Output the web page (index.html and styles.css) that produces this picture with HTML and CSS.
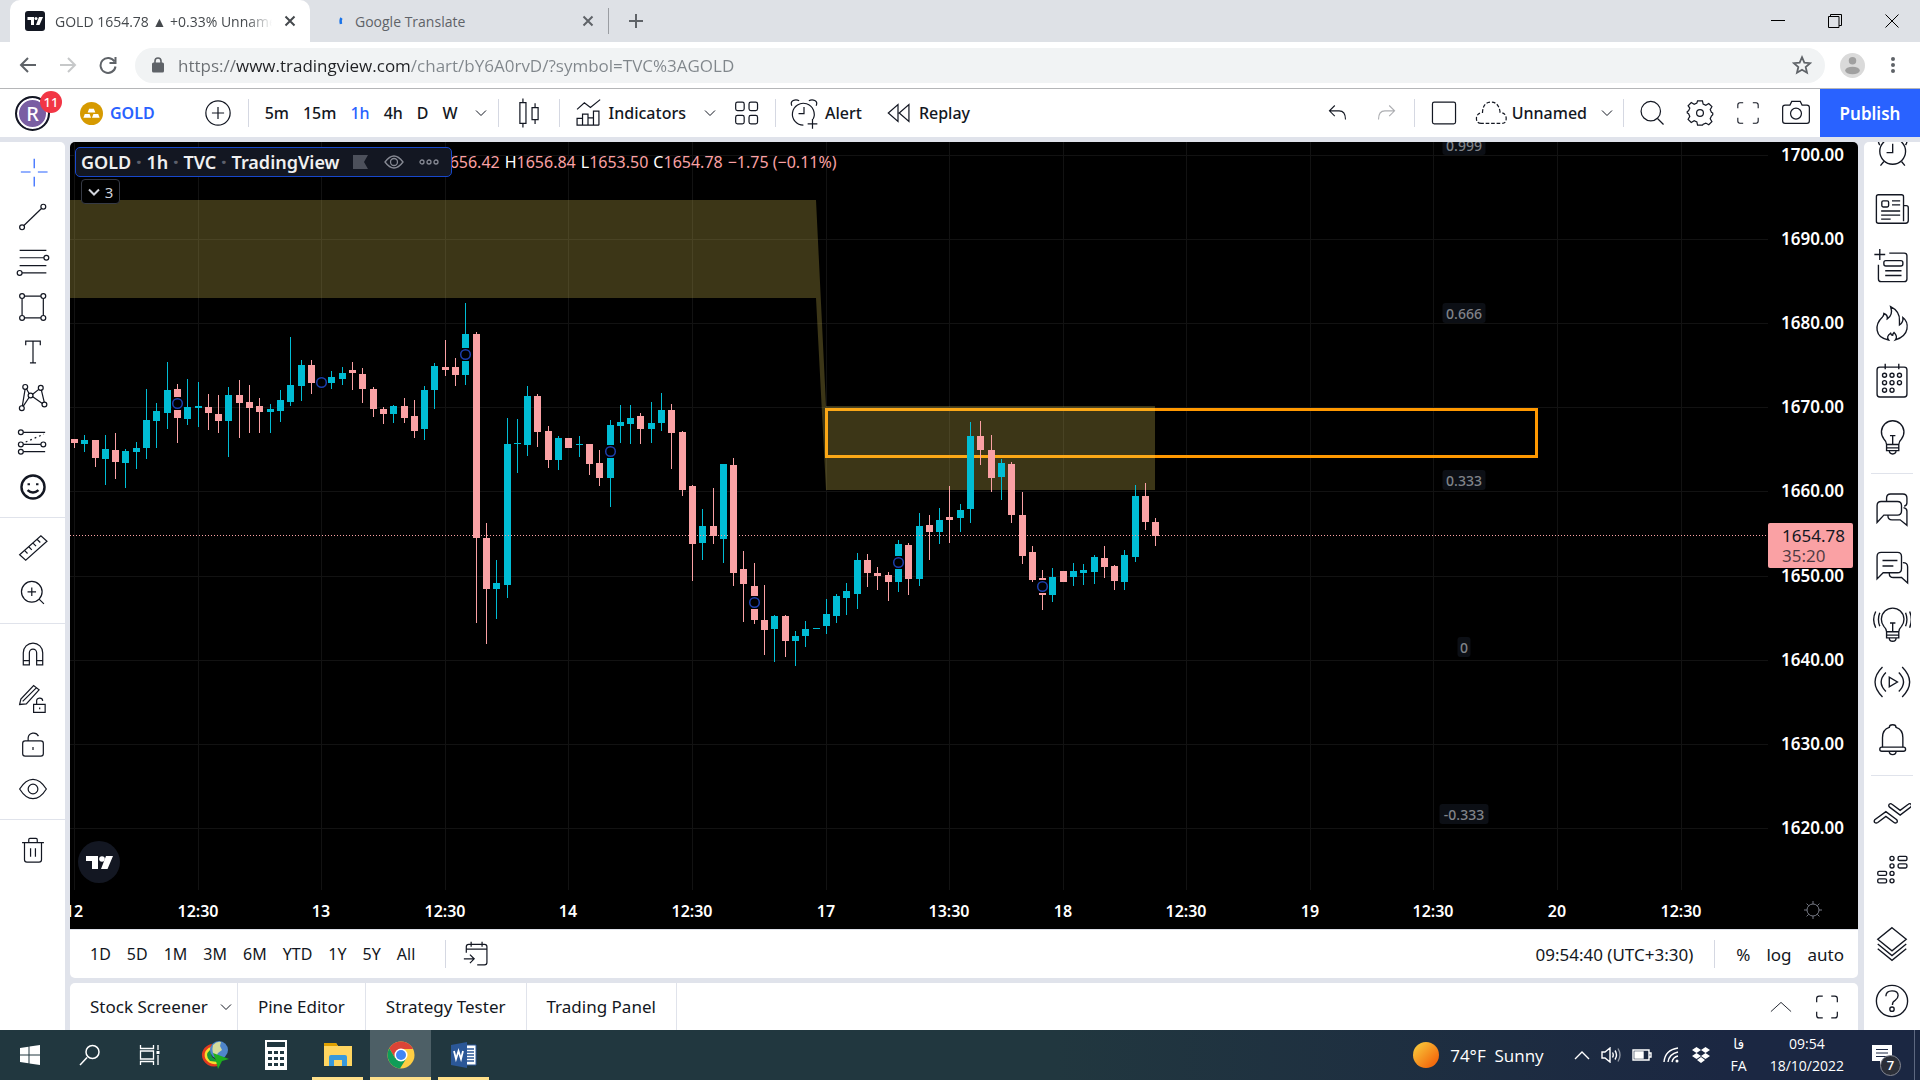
FILE: index.html
```html
<!DOCTYPE html>
<html lang="en">
<head>
    <meta charset="UTF-8">
    <title>GOLD 1654.78 ▲ +0.33% Unnamed</title>
    <link rel="stylesheet" href="styles.css">
</head>
<body>
<!-- browser tabs -->
<div class="tabs">
    <div class="tab current">
        <svg class="favicon" viewBox="0 0 20 20"><rect width="20" height="20" rx="3" fill="#131722"/><path d="M2.500 6h6.500v8H6V9H2.500zM14 6h4l-3.500 8h-3.500z" fill="#fff"/><circle cx="11" cy="7.500" r="1.500" fill="#fff"/></svg>
        <span class="tab-title">GOLD 1654.78 ▲ +0.33% Unnamed</span>
        <button class="close" aria-label="Close tab"><svg viewBox="0 0 12 12"><path d="M1.500 1.500l9 9M10.500 1.500l-9 9"/></svg></button>
    </div>
    <div class="tab">
        <svg class="favicon" viewBox="0 0 20 20"><path d="M16.500 7q-1.500 2-.5 6" fill="none" stroke="#1a73e8" stroke-width="2.500"/></svg>
        <span class="tab-title">Google Translate</span>
        <button class="close" aria-label="Close tab"><svg viewBox="0 0 12 12"><path d="M1.500 1.500l9 9M10.500 1.500l-9 9"/></svg></button>
    </div>
    <button class="new-tab" aria-label="New tab"><svg viewBox="0 0 16 16"><path d="M8 1v14M1 8h14"/></svg></button>
    <div class="window">
        <button aria-label="Minimize"><svg viewBox="0 0 14 14"><path d="M0 6.500h14"/></svg></button>
        <button aria-label="Restore"><svg viewBox="0 0 14 14"><path d="M.5 2.500h10.500v11H.5zM2.500 2.500v-2h11v11h-2.500"/></svg></button>
        <button aria-label="Close"><svg viewBox="0 0 14 14"><path d="M.5.5l13 13M13.500.5l-13 13"/></svg></button>
    </div>
</div>

<!-- address bar -->
<div class="address">
    <button aria-label="Back"><svg viewBox="0 0 18 18"><path d="M17 9H2M9 2L2 9l7 7"/></svg></button>
    <button class="off" aria-label="Forward"><svg viewBox="0 0 18 18"><path d="M1 9h15M9 2l7 7-7 7"/></svg></button>
    <button aria-label="Reload"><svg viewBox="0 0 18 18"><path d="M15.500 5.500A7.500 7.500 0 1 0 16.500 10.500M16.500 1v6h-6"/></svg></button>
    <div class="url">
        <svg class="lock" viewBox="0 0 12 16"><rect y="5.500" width="12" height="10" rx="1.500" fill="#5f6368"/><path d="M3 6V4a3 3 0 0 1 6 0v2" fill="none" stroke="#5f6368" stroke-width="1.600"/></svg>
        <input type="text" aria-label="Address" value="https://www.tradingview.com/chart/bY6A0rvD/?symbol=TVC%3AGOLD">
        <svg class="star" viewBox="0 0 18 18"><path d="M9 2l2.100 4.800 5.200.5-4 3.500 1.200 5.200L9 13.300 4.500 16l1.200-5.200-4-3.500 5.200-.5z"/></svg>
    </div>
    <svg class="person" viewBox="0 0 24 24"><circle cx="12" cy="12" r="12" fill="#dadada"/><circle cx="12" cy="7.500" r="3.600" fill="#a0a0a0"/><ellipse cx="12" cy="16.800" rx="7" ry="3.600" fill="#a0a0a0"/></svg>
    <button class="more" aria-label="Menu"><svg viewBox="0 0 4 18"><circle cx="2" cy="3" r="2"/><circle cx="2" cy="9" r="2"/><circle cx="2" cy="15" r="2"/></svg></button>
</div>

<!-- chart toolbar -->
<div class="toolbar">
    <button class="avatar" aria-label="Account"><span class="face">R</span><span class="badge">11</span></button>
    <button class="symbol"><svg class="coin" viewBox="0 0 24 24"><circle cx="12" cy="12" r="12" fill="#d69a00"/><path d="M9.500 7h5l1.500 4H8zM5 12.500h5l1.500 4h-8zM14 12.500h5l1.500 4h-8z" fill="#fff"/></svg>GOLD</button>
    <button class="add" aria-label="Compare"><svg class="ico" viewBox="0 0 28 28"><circle cx="14" cy="14" r="10"/><path d="M14 9v10M9 14h10"/></svg></button>
    <i class="sep"></i>
    <div class="intervals">
        <button>5m</button><button>15m</button><button class="on">1h</button><button>4h</button><button>D</button><button>W</button>
    </div>
    <button class="drop" aria-label="Intervals"><svg viewBox="0 0 12 12"><path d="M1 3.500l5 5 5-5"/></svg></button>
    <i class="sep"></i>
    <button class="candles" aria-label="Candles"><svg class="ico" viewBox="0 0 28 28"><path d="M6.500 5.500h5v17h-5zM9 2v3.500M9 22.500V26M16.500 9.500h5v10h-5zM19 6v3.500M19 19.500V23"/></svg></button>
    <i class="sep"></i>
    <button class="text"><svg class="ico" viewBox="0 0 28 28"><path d="M5 24v-5.500h4.500V24zM9.500 24v-9H14v9M14 24v-6h4.500v6M18.500 24V12.500H23V24M5 24h18M5 11l6-5.500 5 4L24 3"/></svg>Indicators</button>
    <button class="drop" aria-label="Favorites"><svg viewBox="0 0 12 12"><path d="M1 3.500l5 5 5-5"/></svg></button>
    <button class="tpl" aria-label="Templates"><svg class="ico" viewBox="0 0 28 28"><rect x="5.500" y="5" width="7" height="7" rx="1.500"/><rect x="16.500" y="5" width="7" height="7" rx="1.500"/><rect x="5.500" y="16" width="7" height="7" rx="1.500"/><rect x="16.500" y="16" width="7" height="7" rx="1.500"/></svg></button>
    <i class="sep"></i>
    <button class="text"><svg class="ico" viewBox="0 0 28 28"><path d="M21.500 19a9 9 0 1 0-8 5M14 9v5.500h-4.500M4 8c-2-4 3-6 6-4M24 8c2-4-3-6-6-4M21 19v8M17 23h8"/></svg>Alert</button>
    <button class="text"><svg class="ico" viewBox="0 0 28 28"><path d="M14 7v14L6 14zM23 7v14l-8-7z"/></svg>Replay</button>
    <div class="right">
        <button class="wide" aria-label="Undo"><svg class="ico small" viewBox="0 0 28 28"><path d="M11 7l-5 5 5 5M6 12h9q6 0 6 8"/></svg></button>
        <button class="wide off redo" aria-label="Redo"><svg class="ico small" viewBox="0 0 28 28"><path d="M17 7l5 5-5 5M22 12h-9q-6 0-6 8"/></svg></button>
        <i class="sep"></i>
        <button class="lay" aria-label="Layout"><svg class="ico" viewBox="0 0 28 28"><rect x="4.500" y="5" width="19" height="18" rx="1.500"/></svg></button>
        <button class="text"><svg class="ico" viewBox="0 0 28 28"><path stroke-dasharray="3 1.500" d="M6 22.500Q2 22.500 2 18.500t5-5Q7.500 5 14 5t7.500 8.500q5 .5 5 5t-4 4z"/></svg>Unnamed</button>
        <button class="drop" aria-label="Layouts"><svg viewBox="0 0 12 12"><path d="M1 3.500l5 5 5-5"/></svg></button>
        <i class="sep"></i>
        <button class="wide search" aria-label="Search"><svg class="ico" viewBox="0 0 28 28"><circle cx="13" cy="12.500" r="8"/><path d="M18.500 18.500l5 5"/></svg></button>
        <button class="wide" aria-label="Settings"><svg class="ico" viewBox="0 0 28 28"><circle cx="14" cy="14" r="2.800"/><path d="M12 4h4l.6 2.600 2.200 1 2.400-1.400 2.600 2.600-1.400 2.400 1 2.200 1.100.6v1.500l-1.100 1-1 2.200 1.400 2.400-2.600 2.600-2.400-1.400-2.200 1L16 24h-4l-.6-2.600-2.200-1-2.400 1.400-2.600-2.600 1.400-2.400-1-2.200L3.500 14v-1.200l1.100-.6 1-2.200L4.200 8l2.600-2.600 2.400 1.400 2.200-1z"/></svg></button>
        <button class="wide" aria-label="Fullscreen"><svg class="ico small" viewBox="0 0 28 28"><path d="M4.500 9.500V6.500q0-2 2-2h3M18.500 4.500h3q2 0 2 2v3M23.500 18.500v3q0 2-2 2h-3M9.500 23.500h-3q-2 0-2-2v-3"/></svg></button>
        <button class="wide" aria-label="Snapshot"><svg class="ico" viewBox="0 0 28 28"><path d="M9 7.500l1.500-3h7l1.500 3h4q2 0 2 2v11q0 2-2 2H5q-2 0-2-2v-11q0-2 2-2z"/><circle cx="14" cy="14.500" r="4.500"/></svg></button>
        <button class="publish">Publish</button>
    </div>
</div>

<div class="main">
    <!-- drawing tools -->
    <div class="tools">
        <button class="blue" aria-label="Cross"><svg class="ico" viewBox="0 0 28 28"><path d="M4 14h8M18 14h8M15 3v8M15 18v8"/></svg></button>
        <button aria-label="Trend line"><svg class="ico" viewBox="0 0 28 28"><circle cx="5" cy="22.500" r="2"/><circle cx="22.500" cy="5.500" r="2"/><path d="M6.500 21L21 7"/></svg></button>
        <button aria-label="Fib retracement"><svg class="ico" viewBox="0 0 28 28"><path d="M3 4.500h22M3 10.500h20M3 17h22M5 23h20"/><circle cx="25" cy="10.500" r="2"/><circle cx="3" cy="23" r="2"/></svg></button>
        <button aria-label="Rectangle"><svg class="ico" viewBox="0 0 28 28"><path d="M5 7v14M22.500 7v14M7 5h13.500M7 23h13.500"/><circle cx="5" cy="5" r="2"/><circle cx="22.500" cy="5" r="2"/><circle cx="5" cy="23" r="2"/><circle cx="22.500" cy="23" r="2"/></svg></button>
        <button aria-label="Text"><svg class="ico" viewBox="0 0 28 28"><path d="M8 8.500V5h12v3.500M14 5v18M11.500 23h5"/></svg></button>
        <button aria-label="Pattern"><svg class="ico" viewBox="0 0 28 28"><path d="M5.200 21.500L7.500 7.500M8.500 7L11 11.500M13.500 13.500l8.500 6M6 21.500l5-7.500M13.500 12L19 7.500M20.800 8l2.500 10.500"/><circle cx="7.600" cy="5.700" r="2"/><circle cx="20.400" cy="6.500" r="2"/><circle cx="12" cy="12.800" r="2"/><circle cx="4.800" cy="23.200" r="2"/><circle cx="23.400" cy="20.200" r="2"/></svg></button>
        <button aria-label="Forecast"><svg class="ico" viewBox="0 0 28 28"><path d="M6 6h18M6 16h14.500M6 22h18"/><path stroke-dasharray="1.500 2.500" d="M8 14l15-6.500"/><circle cx="4" cy="6" r="2"/><circle cx="4" cy="16" r="2"/><circle cx="4" cy="22" r="2"/><circle cx="22.500" cy="16" r="2"/></svg></button>
        <button aria-label="Icons"><svg class="ico bold" viewBox="0 0 28 28"><circle cx="14" cy="14" r="9.500"/><path d="M9.500 16.500q4.500 4 9 0M10.500 11v1.500M17.500 11v1.500"/></svg></button>
        <hr>
        <button aria-label="Measure"><svg class="ico" viewBox="0 0 28 28"><path d="M3 19.500L20.500 4l5 4.500L8 24zM7 16l2.500 2.500M10.500 13l2.500 2.500M14 10l2.500 2.500M17.500 7l2.500 2.500"/></svg></button>
        <button aria-label="Zoom in"><svg class="ico" viewBox="0 0 28 28"><circle cx="13" cy="13" r="8.500"/><path d="M19 19l4 4M13 9.500v7M9.500 13h7"/></svg></button>
        <hr>
        <button aria-label="Magnet"><svg class="ico" viewBox="0 0 28 28"><path d="M6 23V13a8 8 0 0 1 16 0v10h-5V13a3 3 0 0 0-6 0v10zM6 19.500h5M17 19.500h5"/></svg></button>
        <button aria-label="Stay in drawing mode"><svg class="ico" viewBox="0 0 28 28"><path d="M3 18.500l1-4.500L14.500 3l4.500 3.500L8.500 18zM5.500 16L16.500 5M14.500 18.500h9.500v6.500h-9.500zM17 18.500v-2.500a2.500 2.500 0 0 1 5-.5M19.500 21v1.500"/></svg></button>
        <button aria-label="Lock drawings"><svg class="ico" viewBox="0 0 28 28"><rect x="5.500" y="11.500" width="17" height="12.500" rx="2"/><path d="M10 11.500V9a4.500 4.500 0 0 1 8.500-1.500M14 16.500v2.500"/></svg></button>
        <button aria-label="Hide drawings"><svg class="ico" viewBox="0 0 28 28"><path d="M3 14q5-8 11-8t11 8q-5 8-11 8T3 14z"/><circle cx="14" cy="14" r="4"/></svg></button>
        <hr>
        <button aria-label="Remove"><svg class="ico" viewBox="0 0 28 28"><path d="M5 8h18M10.500 8V5.500q0-1 1-1h5q1 0 1 1V8M7 8v14q0 2 2 2h10q2 0 2-2V8M12 12.500v7M16 12.500v7"/></svg></button>
    </div>

    <div class="center">
        <div class="chart">
            <svg class="plot" id="plot" viewBox="0 0 1788 787" preserveAspectRatio="xMinYMin meet" role="img" aria-label="GOLD 1h candles"></svg>
            <div class="legend">
                <div class="title">
                    <span>GOLD</span><b>·</b><span>1h</span><b>·</b><span>TVC</span><b>·</b><span>TradingView</span>
                    <svg class="flag" viewBox="0 0 16 16"><path d="M0 1h15l-4 7 4 7H0z" fill="#4c505b"/></svg>
                    <svg class="eye" viewBox="0 0 20 14"><path d="M1 7q4.500-6 9-6t9 6q-4.500 6-9 6T1 7z"/><circle cx="10" cy="7" r="3.500"/></svg>
                    <svg class="dots" viewBox="0 0 20 6"><circle cx="3" cy="3" r="2"/><circle cx="10" cy="3" r="2"/><circle cx="17" cy="3" r="2"/></svg>
                </div>
                <div class="ohlc">
                    <span>O<em>1656.42</em></span><span>H<em>1656.84</em></span><span>L<em>1653.50</em></span><span>C<em>1654.78</em></span><span><em>−1.75 (−0.11%)</em></span>
                </div>
            </div>
            <button class="count"><svg viewBox="0 0 12 12"><path d="M1 3.500l5 5 5-5"/></svg>3</button>
            <svg class="logo" viewBox="0 0 42 42"><circle cx="21" cy="21" r="21" fill="#131722"/><path d="M8 15h12v13h-6v-8H8zM28 15h7l-5.500 13h-6.500z" fill="#fff"/><circle cx="24" cy="18" r="2.800" fill="#fff"/></svg>
            <button class="axis-set" aria-label="Scale settings"><svg viewBox="0 0 20 20"><circle cx="10" cy="10" r="6"/><path d="M10 1v3M10 16v3M1 10h3M16 10h3M3.600 3.600l2.100 2.100M14.300 14.300l2.100 2.100M3.600 16.400l2.100-2.100M14.300 5.700l2.100-2.100"/></svg></button>
        </div>
        <div class="range">
            <div class="dates">
                <button>1D</button><button>5D</button><button>1M</button><button>3M</button><button>6M</button><button>YTD</button><button>1Y</button><button>5Y</button><button>All</button>
            </div>
            <i class="sep"></i>
            <button class="goto" aria-label="Go to date"><svg class="ico" viewBox="0 0 28 28"><path d="M6 13V8q0-2 2-2h13q2 0 2 2v13q0 2-2 2h-6M6 10h17M10 4v4M19 4v4M4 18h8M9 14.500l3.500 3.500L9 21.500"/></svg></button>
            <div class="right">
                <button class="clock">09:54:40 (UTC+3:30)</button>
                <i class="sep"></i>
                <button>%</button><button>log</button><button>auto</button>
            </div>
        </div>
        <div class="panels">
            <button class="panel first">Stock Screener<svg viewBox="0 0 12 12"><path d="M1 3.500l5 5 5-5"/></svg></button>
            <button class="panel">Pine Editor</button>
            <button class="panel">Strategy Tester</button>
            <button class="panel">Trading Panel</button>
            <div class="right">
                <button aria-label="Open panel"><svg class="up" viewBox="0 0 24 12"><path d="M1 11L12 1l11 10"/></svg></button>
                <button aria-label="Maximize panel"><svg class="ico" viewBox="0 0 28 28"><path d="M5.500 10V7q0-2 2-2h3M17.500 5h3q2 0 2 2v3M22.500 18v3q0 2-2 2h-3M10.500 23h-3q-2 0-2-2v-3"/></svg></button>
            </div>
        </div>
    </div>

    <!-- widget bar -->
    <div class="widgets">
        <button aria-label="Alerts"><svg class="ico" viewBox="0 0 28 28"><circle cx="14.500" cy="13.500" r="9.500"/><path d="M14.500 8v6.500H10M5 9Q2 4 8 3M24 9q3-5-3-6M8 21l-2.500 3M21 21l2.500 3"/></svg></button>
        <button aria-label="News"><svg class="ico" viewBox="0 0 28 28"><path d="M22.500 11.500h2q1.500 0 1.500 1.500v9.500q0 2-2 2H4q-1.500 0-1.500-1.500V5Q2.500 3.500 4 3.500h17q1.500 0 1.500 1.500v18M14 8h6M14 11h6M6 15.500h14M6 18.500h14M6 21.500h7"/><rect x="6.500" y="8" width="5" height="4.500" rx="1"/></svg></button>
        <button aria-label="Data window"><svg class="ico" viewBox="0 0 28 28"><path d="M12 4.500h11q2 0 2 2v17q0 2-2 2H6q-2 0-2-2V13M1 5.500h8M5 1.500v8M9 17.500h12M9 21h12"/><rect x="8" y="10" width="14" height="4" rx="1.500"/></svg></button>
        <button aria-label="Hotlists"><svg class="ico" viewBox="0 0 28 28"><path d="M11.500 26.500C1 25 1 15 7 9.500q1-1 1-2.500 3 1 2.500 4Q15 8 13 2q7 3.500 6.500 10.500v3q3-2 2.500-5.500Q26 13 25 18.500t-8.500 8q2-2.500-1-5.500-1 1-1 2-1 0-1.500-1.500Q9.500 24 11.500 26.500z"/></svg></button>
        <button aria-label="Calendar"><svg class="ico" viewBox="0 0 28 28"><rect x="3" y="4.500" width="22" height="22" rx="2"/><path d="M9 2V6M19 2V6"/><circle cx="8.500" cy="10.500" r="1.500"/><circle cx="14" cy="10.500" r="1.500"/><circle cx="19.500" cy="10.500" r="1.500"/><circle cx="8.500" cy="16" r="1.500"/><circle cx="14" cy="16" r="1.500"/><circle cx="19.500" cy="16" r="1.500"/><circle cx="8.500" cy="21.500" r="1.500"/><circle cx="14" cy="21.500" r="1.500"/></svg></button>
        <button aria-label="Ideas"><svg class="ico" viewBox="0 0 28 28"><path d="M10 19.500q0-2-2-4a8.300 8.300 0 1 1 13 0q-2 2-2 4zM10 19.500v4.500h9v-4.500M10 22h9M12 24q0 2.500 2.500 2.500T17 24M12.500 13h4M14.500 13v6"/></svg></button>
        <hr>
        <button aria-label="Public chats"><svg class="ico" viewBox="0 0 28 28"><path d="M3 22.500V10q0-3 3-3h12q3 0 3 3v4q0 3-3 3H8zM10 7V4.500q0-3 3-3h9q3 0 3 3V8q0 2-2 2.500M11 17.500q0 3 3 3h6l5 4V14q0-2-2.500-2.500"/></svg></button>
        <button aria-label="Private chats"><svg class="ico" viewBox="0 0 28 28"><path d="M3 22V5.500q0-3 3-3h12q3 0 3 3v9q0 3-3 3H7.500zM7 8.500h11M7 12.500h8M12 18q0 3 3 3h6l4.500 4V13q0-3-3.500-3"/></svg></button>
        <button aria-label="Ideas stream"><svg class="ico" viewBox="0 0 28 28"><path d="M10 19q0-2-2-4a8.300 8.300 0 1 1 13 0q-2 2-2 4zM10 19v4.500h9v-4.500M10 21.500h9M12 23.500q0 2.500 2.500 2.500T17 23.500M12.500 12.500h4M14.500 12.500v6M5 5q-2 5 0 10M2 4q-3 6 0 12M24 5q2 5 0 10M27 4q2.500 6 0 12"/></svg></button>
        <button aria-label="Streams"><svg class="ico" viewBox="0 0 28 28"><path d="M7 3q-11 11 0 22M9.500 7q-7 7 0 14M21.500 3q11 11 0 22M19 7q7 7 0 14M12 10.500v7l6-3.500z"/></svg></button>
        <button aria-label="Notifications"><svg class="ico" viewBox="0 0 28 28"><path d="M7 20v-7q0-6 5-7.500 0-2 2.500-2t2.500 2q5 1.500 5 7.500v7M12 23q0 2.500 2.500 2.500T17 23"/><rect x="5" y="20" width="19" height="3" rx="1.500"/></svg></button>
        <hr>
        <button aria-label="Order panel"><svg class="ico" viewBox="0 0 28 28"><path d="M1.300 21q-.8-1 0-2L9.500 13l8 6q.8 1 0 2-1 .8-2 0l-6-4.500-6 4.500q-1.200.8-2.200 0zM12 7.500q1-.8 2 0l6 4.500 6-4.500q1-.8 2 0 .8 1 0 2L20 15.500l-8-6q-.8-1 0-2z"/></svg></button>
        <button aria-label="Depth of market"><svg class="ico" viewBox="0 0 28 28"><rect x="18.500" y="4" width="6.500" height="3" rx="1"/><rect x="18.500" y="9.500" width="6.500" height="3" rx="1"/><rect x="3.500" y="15" width="6.500" height="3" rx="1"/><rect x="3.500" y="20.500" width="6.500" height="3" rx="1"/><circle cx="14" cy="5.500" r="1.500"/><circle cx="14" cy="11" r="1.500"/><circle cx="14" cy="16.500" r="1.500"/><circle cx="14" cy="22" r="1.500"/></svg></button>
        <span class="fill"></span>
        <button aria-label="Object tree"><svg class="ico" viewBox="0 0 28 28"><path d="M14 2l10.500 8.500L14 19 3.500 10.500zM3.500 14L14 22.500 24.500 14M3.500 17.500L14 26l10.500-8.500"/></svg></button>
        <button aria-label="Help"><svg class="ico" viewBox="0 0 28 28"><circle cx="14" cy="14" r="11.500"/><path d="M9.500 10.500q0-4 4.500-4t4.500 3.500q0 2-2.200 3.500-2 1-2 3.500"/><circle cx="14" cy="20" r="1.600"/></svg></button>
    </div>
</div>

<!-- taskbar -->
<div class="taskbar">
    <button class="sys" aria-label="Start"><svg width="20" height="20" viewBox="0 0 20 20"><path d="M0 3l8.500-1.200v7.700H0zM9.500 1.600L20 0v9.500H9.500zM0 10.500h8.500v7.700L0 17zM9.500 10.500H20V20L9.500 18.400z" fill="#fff"/></svg></button>
    <button class="sys" aria-label="Search"><svg width="22" height="22" viewBox="0 0 22 22"><path d="M1 21l7-7.500" fill="none" stroke="#fff" stroke-width="1.500"/><circle cx="13.500" cy="8" r="6.500" fill="none" stroke="#fff" stroke-width="1.500"/></svg></button>
    <button class="sys" aria-label="Task view"><svg width="22" height="20" viewBox="0 0 22 20"><path d="M1.500 0v3.500h13V0M1.500 20v-3.500h13V20M1.500 6h13v8h-13zM19 0v5M19 10v10" fill="none" stroke="#fff" stroke-width="1.300"/><rect x="17.500" y="6" width="3" height="3" fill="#fff"/></svg></button>
    <button class="pinned" aria-label="Download manager"><svg width="30" height="28" viewBox="0 0 30 28"><path d="M12 3C1 5-2 18 8 24q6 3 12 0l-6-6q-5-2-4-7z" fill="#e33b1f"/><path d="M11 6C4 8 2 17 9 21.500q5 3 10 1l-6-5q-4-2-3-6z" fill="#f6dd2d"/><path d="M10 9q-6 5 0 11l8 1-6-5z" fill="#159a3c"/><circle cx="19" cy="9" r="9" fill="#4f86cb"/><path d="M13 4q4-4 8-3l-1 4 2 4-4 3-2 4q-5-4-3-12z" fill="#d5dc9c"/><path d="M13 12l16 6-7 2-4 8-2-8z" fill="#1fae1f"/></svg></button>
    <button aria-label="Calculator"><svg width="22" height="30" viewBox="0 0 22 30"><path d="M0 0h22v30H0z" fill="#fff"/><path d="M2 2h18v5H2zM3 11h4v3H3zM9 11h4v3H9zM15 11h4v3h-4zM3 17h4v3H3zM9 17h4v3H9zM15 17h4v3h-4zM3 23h4v3H3zM9 23h4v3H9zM15 23h4v3h-4z" fill="#21373f"/></svg></button>
    <button class="open" aria-label="File Explorer"><svg width="28" height="24" viewBox="0 0 28 24"><path d="M0 0h12l2 3h14v20H0z" fill="#ffd560"/><path d="M0 0h12l2 3H0z" fill="#dfa000"/><path d="M5 23v-9q0-2 2-2h14q2 0 2 2v9h-5v-6h-8v6z" fill="#3899dc"/></svg></button>
    <button class="open on" aria-label="Chrome"><svg width="28" height="28" viewBox="0 0 28 28"><circle cx="14" cy="14" r="13.500" fill="#ffce43"/><path d="M14 .5A13.500 13.500 0 0 0 2.300 7.300L8 17l6-9h12A13.500 13.500 0 0 0 14 .5z" fill="#dc4437"/><path d="M2.300 7.300A13.500 13.500 0 0 0 13 27.500L19 18l-11-1z" fill="#109d58"/><circle cx="14" cy="14" r="6.500" fill="#fff"/><circle cx="14" cy="14" r="5" fill="#4285f4"/></svg></button>
    <button class="open" aria-label="Word"><svg width="26" height="26" viewBox="0 0 26 26"><path d="M13 3h12v20H13z" fill="#fff" stroke="#2b5797"/><path d="M15 7h8M15 10h8M15 13h8M15 16h8M15 19h8" stroke="#2b5797" stroke-width="1.500"/><path d="M0 3l16-3v26L0 23z" fill="#2b5797"/><path d="M3 9l2 8 2.500-8L10 17l2-8" fill="none" stroke="#fff" stroke-width="1.800"/></svg></button>
    <div class="tray">
        <svg width="26" height="26" viewBox="0 0 26 26"><defs><linearGradient id="sun" x2="1" y2="1"><stop offset="0.100" stop-color="#f8c73a"/><stop offset="0.800" stop-color="#f36c0e"/></linearGradient></defs><circle cx="13" cy="13" r="13" fill="url(#sun)"/></svg>
        <span class="weather">74°F&nbsp; Sunny</span>
        <svg width="16" height="10" viewBox="0 0 16 10"><path d="M1 9l7-7 7 7"/></svg>
        <svg width="20" height="16" viewBox="0 0 20 16"><path d="M1 5h3l5-4v14l-5-4H1zM11.500 5.500q1.500 2.500 0 5M14 3.500q3 4.500 0 9"/><path opacity=".5" d="M17 1.500q4 6.500 0 13"/></svg>
        <svg width="20" height="12" viewBox="0 0 20 12"><path d="M1 1h16v10H1zM17.500 4h1.500v4h-1.500"/><path d="M3 3h8v6H3z" fill="#fff"/></svg>
        <svg width="18" height="16" viewBox="0 0 18 16"><path d="M1 15Q2 3 15 1M5 15q1-8 10-10M9 15q1-5 6-6"/><circle cx="14" cy="14" r="1.500" fill="#fff" stroke="none"/></svg>
        <svg width="18" height="16" viewBox="0 0 18 16"><path d="M4.500 0L9 3 4.500 6 0 3zM13.500 0L18 3l-4.500 3L9 3zM4.500 6L9 9l-4.500 3L0 9zM13.500 6L18 9l-4.500 3L9 9zM9 10l4 3-4 3-4-3z" fill="#fff" stroke="none"/></svg>
        <div class="lang"><span lang="fa">فا</span><span>FA</span></div>
        <div class="clock2"><span>09:54</span><span>18/10/2022</span></div>
        <button class="notes" aria-label="Notifications"><svg width="20" height="20" viewBox="0 0 20 20"><path d="M0 0h20v16h-8l-4 4v-4H0z" fill="#fff"/><path d="M4 4.500h12M4 8h12M4 11.500h12" stroke="#1b2742"/></svg><span>7</span></button>
        <i class="edge"></i>
    </div>
</div>
<script src="script.js"></script>
</body>
</html>
```
FILE: styles.css
```css
*{
    margin: 0;
    padding: 0;
    box-sizing: border-box;
}
body{
    height: 100vh;
    display: flex;
    flex-direction: column;
    overflow: hidden;
    background-color: #e0e3eb;
    color: #131722;
    font: 16px "Noto Sans", sans-serif;
}
button{
    display: flex;
    align-items: center;
    justify-content: center;
    flex: none;
    border: none;
    background: none;
    color: inherit;
    font: inherit;
    white-space: nowrap;
    cursor: pointer;
}
svg{
    flex: none;
}
button svg{
    fill: none;
    stroke: currentColor;
    stroke-width: 1;
}
.ico{
    width: 34px;
    height: 34px;
}
.ico.small{
    width: 30px;
    height: 30px;
}

/* browser tabs */
.tabs{
    height: 42px;
    flex: none;
    display: flex;
    align-items: center;
    padding-left: 10px;
    background-color: #dee1e6;
    color: #5f6368;
    font: 14px "Open Sans", sans-serif;
}
.tab{
    width: 299px;
    height: 42px;
    display: flex;
    align-items: center;
    padding: 0 12px 0 15px;
    border-right: 1px solid #9a9da2;
    border-image: linear-gradient(transparent 20%, #9a9da2 20% 80%, transparent 80%) 1;
}
.tab.current{
    width: 300px;
    border: none;
    border-radius: 10px 10px 0 0;
    background-color: #fff;
    color: #45494d;
}
.favicon{
    width: 20px;
    height: 20px;
    margin-right: 10px;
}
.tab-title{
    flex: 1;
    overflow: hidden;
    white-space: nowrap;
}
.current .tab-title{
    -webkit-mask-image: linear-gradient(90deg, #000 88%, transparent);
    mask-image: linear-gradient(90deg, #000 88%, transparent);
}
.close{
    width: 16px;
    height: 24px;
    margin-left: 10px;
}
.close svg{
    width: 12px;
    height: 12px;
    stroke-width: 2;
}
.new-tab{
    width: 54px;
    height: 40px;
}
.new-tab svg{
    width: 16px;
    height: 16px;
    stroke-width: 2;
}
.window{
    display: flex;
    margin-left: auto;
    color: #000;
}
.window button{
    width: 57px;
    height: 36px;
}
.window svg{
    width: 14px;
    height: 14px;
}

/* address bar */
.address{
    height: 47px;
    flex: none;
    display: flex;
    align-items: center;
    padding: 0 21px 0 8px;
    border-bottom: 1px solid #b5b6b8;
    background-color: #fff;
    color: #5f6368;
}
.address button{
    width: 40px;
    height: 32px;
}
.address button svg{
    width: 18px;
    height: 18px;
    stroke-width: 2;
}
.off{
    opacity: .35;
}
.url{
    flex: 1;
    height: 35px;
    display: flex;
    align-items: center;
    gap: 14px;
    margin: 0 15px 0 7px;
    padding: 0 13px 0 17px;
    border-radius: 18px;
    background-color: #f1f3f4;
}
.lock{
    width: 12px;
    height: 16px;
}
.url input{
    flex: 1;
    border: none;
    outline: none;
    font: 17px "Open Sans", sans-serif;
    color: transparent;
    /* host is darker than the rest of the address */
    background: linear-gradient(90deg, #6b6f73 58px, #202124 58px 232px, #80868b 232px);
    -webkit-background-clip: text;
    background-clip: text;
}
.star{
    width: 20px;
    height: 20px;
    fill: none;
    stroke: #5f6368;
    stroke-width: 1.6;
}
.person{
    width: 25px;
    height: 25px;
}
.address .more{
    width: 12px;
    margin-left: 22px;
}
.address .more svg{
    width: 4px;
    fill: #5f6368;
    stroke: none;
}

/* chart toolbar */
.toolbar{
    height: 48px;
    flex: none;
    display: flex;
    align-items: center;
    padding-left: 15px;
    background-color: #fff;
    font-weight: 500;
}
.toolbar button{
    height: 48px;
}
.toolbar .wide{
    width: 48px;
}
.sep{
    width: 1px;
    height: 28px;
    flex: none;
    background-color: #d5d8e2;
}
.avatar{
    position: relative;
}
.face{
    width: 35px;
    height: 35px;
    border: 2px solid #131722;
    border-radius: 50%;
    box-shadow: inset 0 0 0 2px #fff;
    background-color: #7a5ea3;
    color: #fff;
    font-size: 20px;
    line-height: 31px;
}
.badge{
    position: absolute;
    left: 25px;
    top: 2px;
    width: 22px;
    height: 22px;
    border-radius: 50%;
    background-color: #f23645;
    color: #fff;
    font-size: 13px;
    line-height: 22px;
}
.symbol{
    gap: 7px;
    margin-left: 30px;
    color: #2962ff;
    font-weight: 600;
}
.coin{
    width: 23px;
    height: 23px;
    stroke: none;
}
.add{
    width: 60px;
    margin-left: 33px;
}
.intervals{
    display: flex;
    padding-left: 9px;
}
.intervals button{
    padding: 0 7px;
}
.on{
    color: #2962ff;
}
.drop{
    width: 33px;
}
.drop svg, .panel svg, .count svg{
    width: 12px;
    height: 12px;
}
.candles{
    width: 60px;
}
.text{
    gap: 4px;
    padding: 0 8px 0 11px;
}
.tpl{
    width: 39px;
    margin-right: 9px;
}
.right{
    display: flex;
    align-items: center;
    margin-left: auto;
}
.toolbar .right .text{
    padding: 0 3px 0 1px;
}
.redo{
    margin-right: 4px;
}
.lay{
    width: 58px;
}
.toolbar .search{
    width: 52px;
    padding-left: 4px;
}
.toolbar .publish{
    width: 100px;
    background-color: #2962ff;
    color: #fff;
    font-size: 17px;
    font-weight: 600;
}

/* main area */
.main{
    flex: 1;
    min-height: 0;
    display: flex;
    gap: 5px;
    padding-top: 5px;
}
.tools{
    width: 65px;
    flex: none;
    padding-top: 7px;
    border-radius: 0 5px 0 0;
    background-color: #fff;
}
.tools button{
    width: 65px;
    height: 45px;
}
.tools hr, .widgets hr{
    height: 1px;
    margin: 8px 0 7px;
    border: none;
    background-color: #e0e3eb;
}
.blue{
    color: #2962ff;
}
.tools .bold{
    stroke-width: 2;
}
.center{
    flex: 1;
    min-width: 0;
    display: flex;
    flex-direction: column;
}
.chart{
    position: relative;
    flex: 1;
    min-height: 0;
    overflow: hidden;
    border-radius: 5px 5px 0 0;
    background-color: #000;
}
.plot{
    display: block;
    width: 100%;
}
.plot .label{
    fill: #fff;
    font-size: 16px;
    font-weight: 600;
}
.plot .price{
    font-size: 17px;
}
.plot .level{
    fill: #808389;
    font-size: 14px;
    font-weight: 500;
}
.plot .tag{
    fill: #131722;
    font-size: 17px;
}
.legend{
    position: absolute;
    left: 5px;
    top: 5px;
    display: flex;
    align-items: center;
}
.title{
    z-index: 1;
    width: 377px;
    height: 30px;
    display: flex;
    align-items: center;
    gap: 5px;
    padding-left: 5px;
    border: 1px solid #1848cc;
    border-radius: 5px;
    background-color: #131722;
    color: #f0f0f0;
    font-size: 18px;
    font-weight: 600;
}
.title b{
    color: #5d606b;
}
.flag{
    width: 16px;
    height: 16px;
    margin-left: 8px;
}
.eye, .dots{
    margin-left: 10px;
    width: 20px;
    fill: none;
    stroke: #868993;
    stroke-width: 1.3;
}
.ohlc{
    display: flex;
    gap: 5px;
    margin-left: -24px;
    color: #fff;
    font-size: 16px;
}
.ohlc em{
    color: #faa1a4;
    font-style: normal;
}
.count{
    position: absolute;
    left: 11px;
    top: 37px;
    width: 39px;
    height: 25px;
    gap: 5px;
    border: 1px solid #363a45;
    border-radius: 4px;
    background-color: #000;
    color: #d1d4dc;
    font-size: 15px;
}
.count svg{
    stroke-width: 2;
}
.logo{
    position: absolute;
    left: 8px;
    bottom: 46px;
    width: 42px;
    height: 42px;
}
.axis-set{
    position: absolute;
    right: 35px;
    bottom: 9px;
    color: #787b86;
}
.axis-set svg{
    width: 20px;
    height: 20px;
}

/* date ranges */
.range{
    height: 49px;
    flex: none;
    display: flex;
    align-items: center;
    padding: 0 6px 0 12px;
    border-top: 1px solid #e0e3eb;
    border-radius: 0 0 5px 5px;
    background-color: #fff;
}
.range button{
    height: 34px;
    padding: 0 8px;
}
.dates{
    display: flex;
    margin-right: 9px;
}
.range .right{
    font-size: 17px;
}
.range .sep{
    margin: 0 13px;
}
.range .goto{
    padding: 0;
}

/* bottom panels */
.panels{
    height: 47px;
    flex: none;
    display: flex;
    margin-top: 5px;
    border-radius: 5px 5px 0 0;
    background-color: #fff;
    font-size: 17px;
}
.panel{
    padding: 0 20px;
    border-right: 1px solid #e0e3eb;
}
.panel.first{
    gap: 12px;
    padding-right: 5px;
}
.panels .right{
    gap: 18px;
    padding-right: 14px;
}
.up{
    width: 22px;
    height: 12px;
}

/* widget bar */
.widgets{
    width: 56px;
    flex: none;
    display: flex;
    flex-direction: column;
    margin-left: 1px;
    overflow: hidden;
    border-radius: 5px 0 0 0;
    background-color: #fff;
}
.widgets button{
    width: 56px;
    height: 57px;
}
.widgets button:first-child{
    margin-top: -19px;
}
.widgets button:last-child{
    margin-bottom: 1px;
}
.widgets .ico{
    width: 38px;
    height: 38px;
}
.widgets hr{
    flex: none;
    margin: 8px 7px;
}
.fill{
    flex: 1;
}

/* taskbar */
.taskbar{
    height: 50px;
    flex: none;
    display: flex;
    background: linear-gradient(90deg, #21373f 55%, #1b2742 90%);
    color: #fff;
    font: 16px "Open Sans", sans-serif;
}
.taskbar button{
    width: 61px;
    height: 50px;
}
.taskbar button svg{
    stroke: none;
}
.taskbar .sys{
    width: 60px;
}
.pinned{
    margin-left: 4px;
}
.taskbar .open{
    width: 51px;
    margin: 0 6px;
    border-top: 3px solid transparent;
    border-bottom: 3px solid #ffe08a;
}
.taskbar .open.on{
    width: 61px;
    margin: 0 1px;
    border-top-color: #4d5f66;
    background-color: #4d5f66;
}
.tray{
    display: flex;
    align-items: center;
    gap: 11px;
    margin-left: auto;
}
.tray > svg{
    fill: none;
    stroke: #fff;
    stroke-width: 1.4;
}
.tray > svg:first-child{
    stroke: none;
}
.weather{
    margin-right: 19px;
    font-size: 17px;
}
.lang, .clock2{
    display: flex;
    flex-direction: column;
    align-items: center;
    gap: 4px;
    font-size: 14px;
    line-height: 18px;
}
.lang{
    margin: 0 12px 0 10px;
    font-family: "Open Sans", "DejaVu Sans", sans-serif;
}
.taskbar .notes{
    position: relative;
    width: 42px;
    margin-left: 6px;
}
.notes span{
    position: absolute;
    right: 2px;
    bottom: 4px;
    width: 21px;
    height: 21px;
    border: 1px solid #868993;
    border-radius: 50%;
    background-color: #2b2f38;
    font-size: 13px;
    font-weight: 600;
    line-height: 19px;
}
.edge{
    width: 6px;
    height: 50px;
    border-left: 1px solid #5d6880;
}
```
FILE: script.js
```js
var plot = document.getElementById("plot");

// high, body top, body bottom, low, 1 = up / 0 = down
var bars = [
    [297,297,301,306,0],[293,298,302,310,1],[298,298,316,325,0],[293,307,317,343,1],[291,308,320,337,0],
    [307,309,321,346,1],[300,306,310,327,1],[247,278,306,317,1],[261,269,279,306,1],[220,248,271,287,1],
    [242,247,276,301,0],[237,265,277,283,1],[240,264,266,285,1],[252,265,271,288,0],[253,272,279,291,0],
    [245,253,279,315,1],[238,253,261,296,0],[243,260,266,291,0],[256,264,270,291,0],[262,267,270,291,1],
    [248,258,269,280,1],[195,243,260,264,1],[218,223,244,259,1],[218,223,241,252,0],[238,239,241,242,0],
    [229,235,241,247,1],[225,231,237,243,1],[220,228,231,248,0],[226,232,247,261,0],[245,247,267,275,0],
    [265,267,272,282,0],[263,264,272,281,1],[256,264,276,281,0],[258,274,289,296,0],[244,248,287,298,1],
    [221,224,248,267,1],[198,225,228,234,0],[216,225,233,244,0],[161,192,233,243,1],[190,192,396,481,0],
    [381,396,447,502,0],[418,441,447,477,1],[276,302,443,456,1],[277,301,302,331,1],[244,254,303,314,1],
    [252,254,290,305,0],[284,289,318,326,0],[294,296,318,328,1],[296,296,306,306,0],[294,302,303,315,1],
    [302,302,322,333,0],[308,321,336,344,0],[278,283,336,365,1],[263,280,284,301,1],[263,276,282,302,1],
    [271,274,287,302,0],[260,281,287,301,1],[251,268,281,289,1],[262,268,291,327,0],[289,290,348,354,0],
    [343,344,402,439,0],[367,384,401,418,1],[346,384,394,402,0],[322,322,397,421,1],[316,323,431,444,0],
    [409,427,442,480,0],[421,444,478,482,0],[443,478,488,513,0],[473,474,487,520,1],[473,474,499,515,0],
    [489,494,499,524,1],[479,487,494,505,1],[486,486,487,487,1],[457,472,484,492,1],[452,454,474,481,1],
    [441,449,456,473,1],[411,418,452,467,1],[412,418,431,445,0],[425,431,434,448,0],[430,433,440,459,0],
    [398,402,440,450,1],[401,403,437,453,0],[371,384,437,444,1],[373,383,390,418,0],[366,378,390,402,1],
    [344,375,378,401,0],[362,368,376,390,1],[280,294,367,381,1],[279,294,308,323,0],[293,308,336,350,0],
    [317,321,335,358,1],[320,322,373,381,0],[350,373,414,422,0],[404,410,438,440,0],[428,436,453,468,0],
    [426,435,453,460,1],[429,429,440,440,0],[421,429,435,444,1],[422,428,431,443,1],[413,415,430,442,1],
    [404,416,425,436,0],[423,424,439,448,0],[408,413,440,448,1],[343,354,415,420,1],[341,354,380,388,0],
    [376,380,394,404,0]
];
var prices = [13,97,181,265,349,434,518,602,686];
var times = [
    [4,"12"],[128,"12:30"],[251,"13"],[375,"12:30"],[498,"14"],[622,"12:30"],[756,"17"],
    [879,"13:30"],[993,"18"],[1116,"12:30"],[1240,"19"],[1363,"12:30"],[1487,"20"],[1611,"12:30"]
];
// bar index, y
var marks = [[10,261],[24,240],[38,212],[52,309],[66,460],[80,420],[94,444]];
// y, text, box width
var levels = [[-7,"0.999",43],[161,"0.666",43],[328,"0.333",43],[495,"0",13],[662,"-0.333",49]];

function add(tag, attrs, text){
    var el = document.createElementNS("http://www.w3.org/2000/svg", tag);
    for(var k in attrs){
        el.setAttribute(k, attrs[k]);
    }
    if(text){
        el.textContent = text;
    }
    plot.appendChild(el);
}
function rect(x, y, w, h, fill){
    add("rect", {x: x, y: y, width: w, height: h, fill: fill});
}
function barX(i){
    return Math.round(4 + i * 10.299);
}

// grid
for(var i = 0; i < prices.length; i++){
    rect(0, prices[i], 1698, 1, "#121212");
}
for(i = 0; i < times.length; i++){
    rect(times[i][0], 0, 1, 748, "#121212");
}

// box and zone
add("rect", {x: 756.5, y: 267.5, width: 710, height: 47, fill: "none", stroke: "#ff9800", "stroke-width": 3});
add("path", {d: "M0 58H746L756 264H1085V348H756L746 156H0z", fill: "#f0d85c", "fill-opacity": .25});

// candles
for(i = 0; i < bars.length; i++){
    var b = bars[i];
    var color = b[4] ? "#00bcd4" : "#faa1a4";
    rect(barX(i), b[0], 1, b[3] - b[0], color);
    rect(barX(i) - 3, b[1], 7, b[2] - b[1], color);
}
for(i = 0; i < marks.length; i++){
    var x = barX(marks[i][0]);
    rect(x - 5, marks[i][1] - 6, 11, 13, "#000");
    add("circle", {cx: x + .5, cy: marks[i][1] + .5, r: 4.8, fill: "#000", stroke: "#1c3fae", "stroke-width": 1.5});
}

// last price
add("path", {d: "M0 393.5H1698", stroke: "#faa1a4", "stroke-dasharray": "1 2"});

for(i = 0; i < levels.length; i++){
    var l = levels[i];
    add("rect", {x: 1394 - l[2] / 2, y: l[0], width: l[2], height: 20, rx: 3, fill: "#0c0f15"});
    add("text", {x: 1394, y: l[0] + 16, "text-anchor": "middle", "class": "level"}, l[1]);
}
for(i = 0; i < prices.length; i++){
    add("text", {x: 1774, y: prices[i] + 6, "text-anchor": "end", "class": "label price"}, (1700 - i * 10) + ".00");
}
for(i = 0; i < times.length; i++){
    add("text", {x: times[i][0], y: 775, "text-anchor": "middle", "class": "label"}, times[i][1]);
}
add("rect", {x: 1698, y: 381, width: 85, height: 45, rx: 2, fill: "#faa1a4"});
add("text", {x: 1712, y: 400, "class": "tag"}, "1654.78");
add("text", {x: 1712, y: 420, "class": "tag", "fill-opacity": .75}, "35:20");
```
